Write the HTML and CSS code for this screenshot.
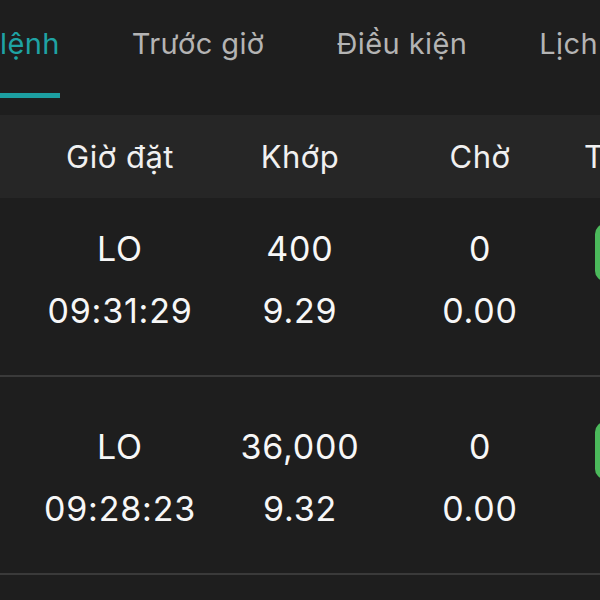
FILE: index.html
```html
<!DOCTYPE html>
<html lang="vi">
<head>
<meta charset="utf-8">
<link rel="stylesheet" href="styles.css">
</head>
<body>
<div class="screen">
  <nav class="tabs">
    <div class="tab active">lệnh</div>
    <div class="tab">Trước giờ</div>
    <div class="tab">Điều kiện</div>
    <div class="tab">Lịch sử</div>
  </nav>
  <div class="table">
    <div class="head">
      <div class="cell">Giờ đặt</div>
      <div class="cell">Khớp</div>
      <div class="cell">Chờ</div>
      <div class="cell">Trạng thái</div>
    </div>
    <div class="row first">
      <div class="cell"><span>LO</span><span>09:31:29</span></div>
      <div class="cell"><span>400</span><span>9.29</span></div>
      <div class="cell"><span>0</span><span>0.00</span></div>
      <div class="cell"><div class="badge"></div></div>
    </div>
    <div class="row">
      <div class="cell"><span>LO</span><span>09:28:23</span></div>
      <div class="cell"><span>36,000</span><span>9.32</span></div>
      <div class="cell"><span>0</span><span>0.00</span></div>
      <div class="cell"><div class="badge"></div></div>
    </div>
    <div class="row"></div>
  </div>
</div>
</body>
</html>
```
FILE: styles.css
```css
* { box-sizing: border-box; margin: 0; padding: 0; }
html, body { background: #1e1e1e; }
body { width: 600px; height: 600px; overflow: hidden; font-family: Inter, "Liberation Sans", sans-serif; }
.screen { width: 600px; height: 600px; overflow: hidden; background: #1e1e1e; }

.tabs { display: flex; gap: 72px; height: 98px; white-space: nowrap; margin-bottom: 17px; }
.tab { font-size: 29px; letter-spacing: 0.4px; color: #b4b4b4; line-height: 88px; height: 98px; border-bottom: 5px solid transparent; flex: none; }
.tab.active { color: #1fa3a4; border-bottom-color: #1c9fa1; }

.table { width: 600px; overflow: hidden; }
.head, .row { display: grid; grid-template-columns: repeat(4, 180px); padding-left: 30px; width: 750px; }
.head { background: #262626; height: 83px; align-items: center; }
.head .cell { text-align: center; font-size: 31px; letter-spacing: 0.5px; color: #f0f0f0; white-space: nowrap; }

.row { padding-top: 39px; padding-bottom: 33px; border-bottom: 2px solid #3a3a3a; }
.row.first { padding-top: 20px; padding-bottom: 33px; }
.row .cell { display: flex; flex-direction: column; align-items: center; font-size: 34px; letter-spacing: 0.8px; line-height: 62px; color: #f7f7f7; white-space: nowrap; }
.badge { width: 130px; height: 57px; border-radius: 10px; background: #4bb95b; margin-top: 6px; }
```
